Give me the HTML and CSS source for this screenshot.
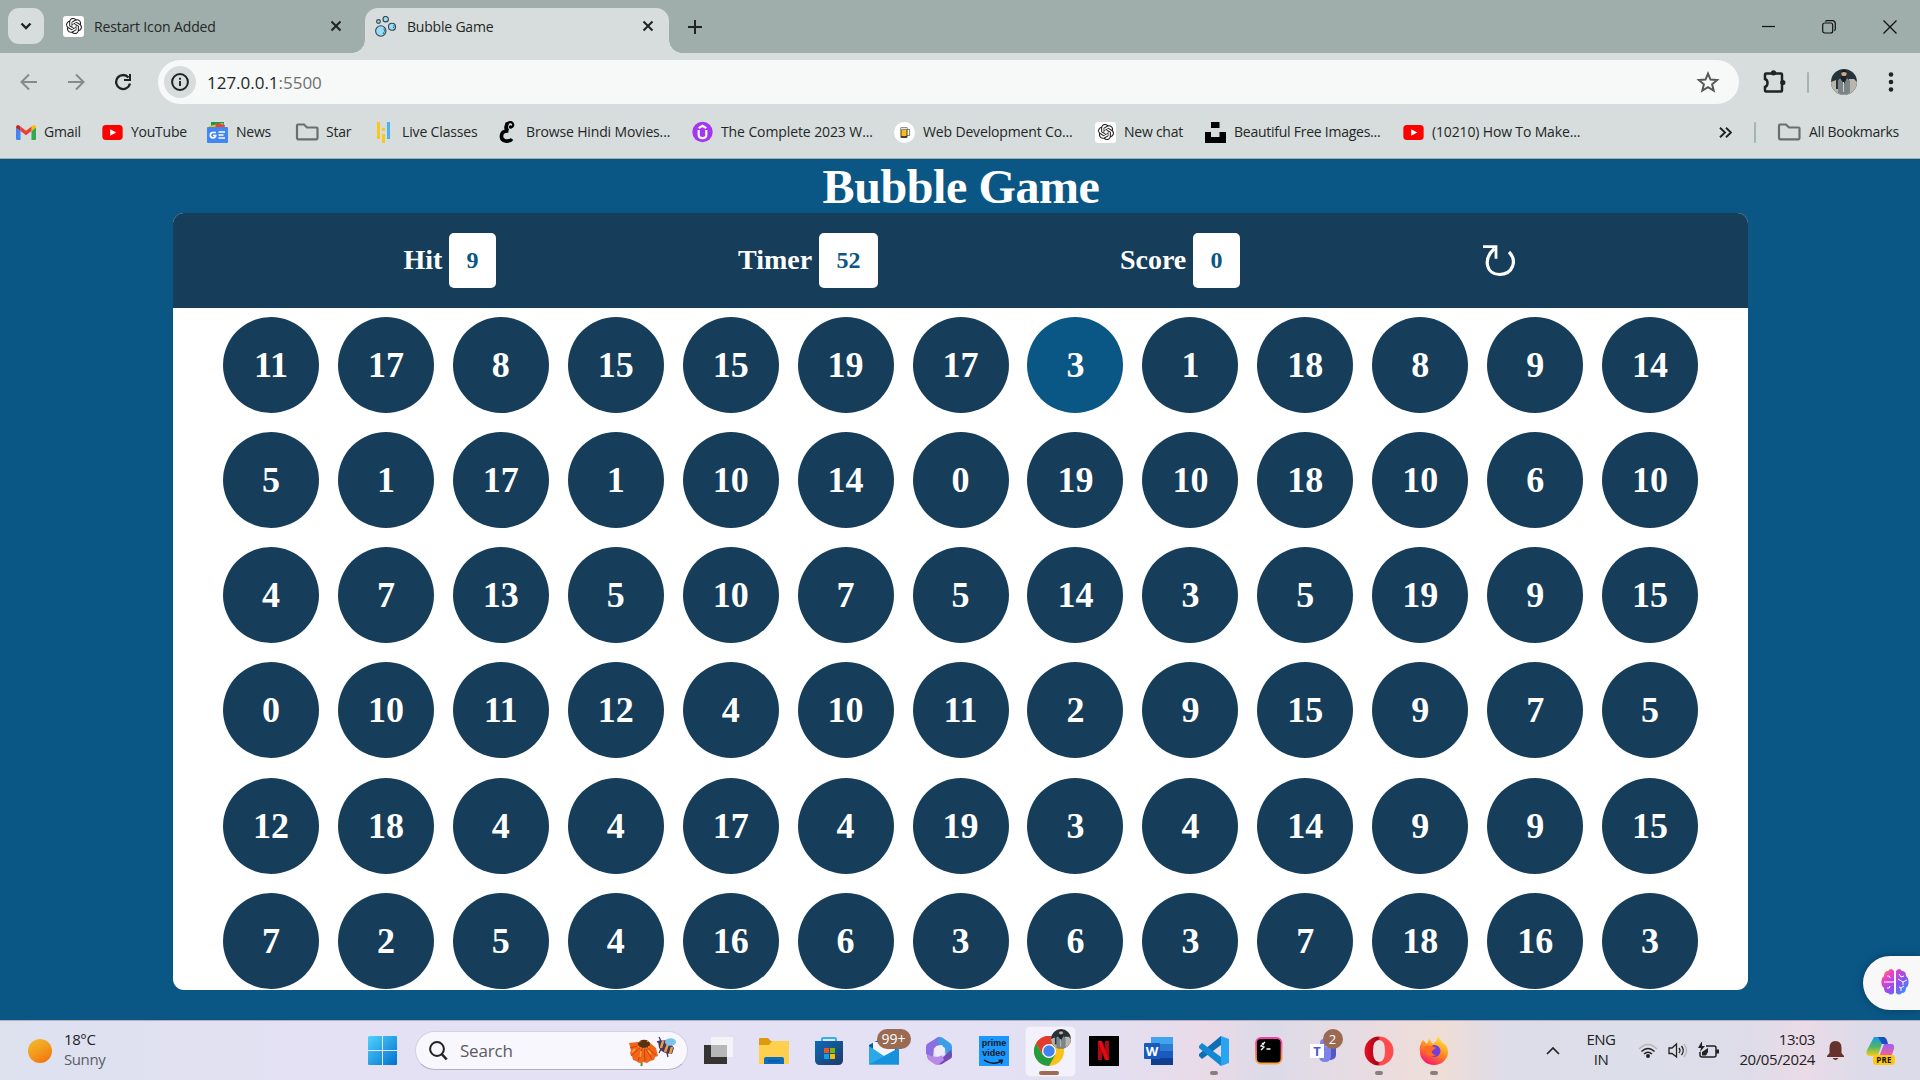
FILE: index.html
```html
<!DOCTYPE html>
<html lang="en">
<head>
<meta charset="utf-8">
<title>Bubble Game</title>
<link rel="stylesheet" href="styles.css">
</head>
<body>
<svg class="defs" width="0" height="0">
  <defs>
    <symbol id="knot" viewBox="0 0 24 24">
      <path fill="#222" d="M22.2819 9.8211a5.9847 5.9847 0 0 0-.5157-4.9108 6.0462 6.0462 0 0 0-6.5098-2.9A6.0651 6.0651 0 0 0 4.9807 4.1818a5.9847 5.9847 0 0 0-3.9977 2.9 6.0462 6.0462 0 0 0 .7427 7.0966 5.98 5.98 0 0 0 .511 4.9107 6.051 6.051 0 0 0 6.5146 2.9001A5.9847 5.9847 0 0 0 13.2599 24a6.0557 6.0557 0 0 0 5.7718-4.2058 5.9894 5.9894 0 0 0 3.9977-2.9001 6.0557 6.0557 0 0 0-.7475-7.0729zm-9.022 12.6081a4.4755 4.4755 0 0 1-2.8764-1.0408l.1419-.0804 4.7783-2.7582a.7948.7948 0 0 0 .3927-.6813v-6.7369l2.02 1.1686a.071.071 0 0 1 .038.052v5.5826a4.504 4.504 0 0 1-4.4945 4.4944zm-9.6607-4.1254a4.4708 4.4708 0 0 1-.5346-3.0137l.142.0852 4.783 2.7582a.7712.7712 0 0 0 .7806 0l5.8428-3.3685v2.3324a.0804.0804 0 0 1-.0332.0615L9.74 19.9502a4.4992 4.4992 0 0 1-6.1408-1.6464zM2.3408 7.8956a4.485 4.485 0 0 1 2.3655-1.9728V11.6a.7664.7664 0 0 0 .3879.6765l5.8144 3.3543-2.0201 1.1685a.0757.0757 0 0 1-.071 0l-4.8303-2.7865A4.504 4.504 0 0 1 2.3408 7.872zm16.5963 3.8558L13.1038 8.364 15.1192 7.2a.0757.0757 0 0 1 .071 0l4.8303 2.7913a4.4944 4.4944 0 0 1-.6765 8.1042v-5.6772a.79.79 0 0 0-.407-.667zm2.0107-3.0231l-.142-.0852-4.7735-2.7818a.7759.7759 0 0 0-.7854 0L9.409 9.2297V6.8974a.0662.0662 0 0 1 .0284-.0615l4.8303-2.7866a4.4992 4.4992 0 0 1 6.6802 4.66zM8.3065 12.863l-2.02-1.1638a.0804.0804 0 0 1-.038-.0567V6.0742a4.4992 4.4992 0 0 1 7.3757-3.4537l-.142.0805L8.704 5.459a.7948.7948 0 0 0-.3927.6813zm1.0976-2.3654l2.602-1.4998 2.6069 1.4998v2.9994l-2.5974 1.4997-2.6067-1.4997Z"/>
    </symbol>
    <symbol id="cross" viewBox="0 0 12 12"><path d="M1.500 1.500l9 9M10.500 1.500l-9 9" stroke="#1f2222" stroke-width="2" fill="none"/></symbol>
    <symbol id="folder" viewBox="0 0 24 18"><path d="M2 14.500v-12q0-1 1-1h6l3 3h9.500q1 0 1 1v9.500q0 1.300-1 1.300H3.200Q2 16.300 2 14.500z" fill="none" stroke="#6b6e6e" stroke-width="2.200"/></symbol>
    <symbol id="youtube" viewBox="0 0 22 16"><rect width="22" height="16" rx="4" fill="#f00"/><path d="M8.500 4.500l6.500 3.500-6.500 3.500z" fill="#fff"/></symbol>
    <symbol id="person" viewBox="0 0 26 26">
      <circle cx="13" cy="13" r="13" fill="#25343a"/>
      <path d="M0 13a13 13 0 0 0 26 0l-3-3h-5v10H5V11z" fill="#b9b5aa"/>
      <path d="M7 11l4-3h4l4 4v12a13 13 0 0 1-12 0z" fill="#7d8487"/>
      <path d="M9 9l4 6 3-6-1-2h-4z" fill="#17222a"/>
      <circle cx="13" cy="4.500" r="2.600" fill="#d0a98c"/><path d="M10.500 4q0-3 2.500-3t2.500 3q-2.500-2-5 0" fill="#16181c"/>
      <path d="M12.500 13v10" stroke="#c9cccc"/>
    </symbol>
  </defs>
</svg>

<header class="browser">
  <div class="tab-strip">
    <button class="tab-search"><svg width="12" height="8" viewBox="0 0 12 8"><path d="M1.500 1.500L6 6l4.500-4.500" fill="none" stroke="#1f2222" stroke-width="2.300"/></svg></button>
    <div class="tab tab-idle">
      <span class="favicon tile"><svg width="16" height="16"><use href="#knot"/></svg></span>
      <span class="tab-title">Restart Icon Added</span>
      <svg class="tab-close" width="12" height="12"><use href="#cross"/></svg>
    </div>
    <div class="tab tab-active">
      <svg class="favicon" viewBox="0 0 21 21"><g fill="#9adcf8" stroke="#35454c" stroke-width="1.100"><circle cx="5.800" cy="15" r="5.200"/><circle cx="17" cy="10.800" r="3.500"/><circle cx="10.700" cy="3.200" r="2.700"/><circle cx="3.500" cy="5.500" r="1.900"/></g><path d="M9 12.500q1.500 3-1 5.500M19 9q.5 2-1 3" stroke="#2c6e94" fill="none"/></svg>
      <span class="tab-title">Bubble Game</span>
      <svg class="tab-close" width="12" height="12"><use href="#cross"/></svg>
    </div>
    <svg class="new-tab" width="14" height="14" viewBox="0 0 14 14"><path d="M7 0v14M0 7h14" stroke="#1f2222" stroke-width="2"/></svg>
    <div class="window-controls">
      <svg width="13" height="13" viewBox="0 0 13 13"><path d="M0 6.500h13" stroke="#111" stroke-width="1.200"/></svg>
      <svg width="14" height="14" viewBox="0 0 14 14"><g fill="none" stroke="#111" stroke-width="1.200"><rect x=".7" y="3" width="10" height="10" rx="2"/><path d="M3.300 1.500q.6-.8 2-.8h5q3 0 3 3v5q0 1.300-.9 2"/></g></svg>
      <svg width="14" height="14" viewBox="0 0 14 14"><path d="M.5.5l13 13M13.500.5l-13 13" stroke="#111" stroke-width="1.300"/></svg>
    </div>
  </div>

  <div class="toolbar">
    <nav class="nav-buttons">
      <svg width="18" height="18" viewBox="0 0 18 18"><path d="M17 9H2M9 1.500L1.500 9 9 16.500" fill="none" stroke="#868b8a" stroke-width="2"/></svg>
      <svg width="18" height="18" viewBox="0 0 18 18"><path d="M1 9h15M9 1.500L16.500 9 9 16.500" fill="none" stroke="#868b8a" stroke-width="2"/></svg>
      <svg width="18" height="18" viewBox="0 0 18 18"><path d="M14.500 4.500A7 7 0 1 0 16 10.500" fill="none" stroke="#1f2222" stroke-width="2.300"/><path d="M17 1v7h-7V6h5V1z" fill="#1f2222"/></svg>
    </nav>
    <div class="address">
      <span class="site-info"><svg width="18" height="18" viewBox="0 0 18 18"><circle cx="9" cy="9" r="7.900" fill="none" stroke="#1f2222" stroke-width="2"/><path d="M9 8v5M9 4.800v2" stroke="#1f2222" stroke-width="1.900"/></svg></span>
      <span class="url">127.0.0.1<i>:5500</i></span>
      <svg class="star" width="24" height="22" viewBox="0 0 24 22"><path d="M12 2.600l2.500 6 6.600.5-5 4.200 1.600 6.300-5.700-3.400-5.700 3.400 1.600-6.300-5-4.200 6.600-.5z" fill="none" stroke="#56595a" stroke-width="2"/></svg>
    </div>
    <div class="tools">
      <svg width="26" height="24" viewBox="0 0 26 24"><path d="M4 4.500q0-1 1-1h15q1 0 1 1v16q0 1-1 1H5q-1 0-1-1V17q2.500-.8 2.500-4T4 9z" fill="none" stroke="#1f2222" stroke-width="2.500"/><circle cx="12.500" cy="2.800" r="2.600" fill="#1f2222"/><circle cx="21.800" cy="12.500" r="2.600" fill="#1f2222"/></svg>
      <span class="divider"></span>
      <svg width="26" height="26"><use href="#person"/></svg>
      <svg width="6" height="20" viewBox="0 0 6 20"><g fill="#1f2222"><circle cx="3" cy="2.500" r="2.300"/><circle cx="3" cy="10" r="2.300"/><circle cx="3" cy="17.500" r="2.300"/></g></svg>
    </div>
  </div>

  <div class="bookmarks">
    <a class="mark"><svg width="20" height="15" viewBox="0 0 20 15"><path d="M0 2v12q0 1 1 1h3.500V6z" fill="#4285f4"/><path d="M20 2v12q0 1-1 1h-3.500V6z" fill="#34a853"/><path d="M15.500 6l4.500-3.500V2q-1-3-3.500-1.300l-1 .8z" fill="#fbbc04"/><path d="M4.500 6L0 2.500V2Q1-1 3.500.7l1 .8z" fill="#c5221f"/><path d="M4.500 1.500L10 5.700l5.500-4.200V6L10 10.300 4.500 6z" fill="#ea4335"/></svg><span>Gmail</span></a>
    <a class="mark"><svg width="21" height="15" viewBox="0 0 22 16"><use href="#youtube"/></svg><span>YouTube</span></a>
    <a class="mark"><svg width="21" height="21" viewBox="0 0 21 21"><path d="M4 0h13v6H4z" fill="#0c9d58"/><path d="M2 4l14-3 2 6H2z" fill="#fbbc04"/><path d="M9 1l9 2-1 5H8z" fill="#ea4335"/><rect y="5" width="21" height="16" rx="1" fill="#4285f4"/><path d="M9 10.500H5.800a2.700 2.700 0 1 0 2.900 3H6M11.500 10h6.500M11.500 13h5M11.500 16h6.500" stroke="#fff" stroke-width="1.700" fill="none"/></svg><span>News</span></a>
    <a class="mark"><svg width="24" height="18"><use href="#folder"/></svg><span class="star-label">Star</span></a>
    <a class="mark"><svg width="16" height="21" viewBox="0 0 16 21"><path d="M1 0h3v17H1zM6 12h3v9H6z" fill="#ffc61a"/><path d="M11 0h3v17h-3z" fill="#4bb3f5"/><path d="M7.500 5.800v3.400" stroke="#ffc61a" stroke-width="3" stroke-dasharray="3 9"/></svg><span class="live">Live Classes</span></a>
    <a class="mark"><svg width="18" height="22" viewBox="0 0 18 22"><path d="M13 6.500q3.500-1.500 1.500-4.500-2-2-5 .2T8 9.500" fill="none" stroke="#000" stroke-width="2.200"/><path d="M10.500 10Q4 9.500 3.500 14.500T7.500 20t6.500-2" fill="none" stroke="#000" stroke-width="3.600"/><path d="M9.500 2Q7 6 9.500 9.500" fill="none" stroke="#000" stroke-width="3.600"/><circle cx="12.500" cy="6" r="1.700"/></svg><span class="movies">Browse Hindi Movies...</span></a>
    <a class="mark"><svg width="21" height="22" viewBox="0 0 22 22"><circle cx="11" cy="11" r="10.700" fill="#a435f0"/><path d="M7 9v5q0 3.500 4 3.500t4-3.500V9M7 7l4-2.500L15 7" fill="none" stroke="#fff" stroke-width="2.300"/></svg><span class="course">The Complete 2023 W...</span></a>
    <a class="mark"><svg width="21" height="21" viewBox="0 0 21 21"><circle cx="10.500" cy="10.500" r="10.500" fill="#fff"/><path d="M13 7.500h2.500v6H13" fill="none" stroke="#888" stroke-width="1.200"/><rect x="6.500" y="5" width="7" height="11" rx="1" fill="#493c2a"/><path d="M7.500 8h5v6h-5z" fill="#f6bd1c"/><path d="M7 5.500h6v2H7z" fill="#e7e2d5"/></svg><span class="webdev">Web Development Co...</span></a>
    <a class="mark"><span class="tile favicon"><svg width="16" height="16"><use href="#knot"/></svg></span><span>New chat</span></a>
    <a class="mark"><svg width="21" height="21" viewBox="0 0 21 21"><path d="M6 0h8.500v6H6zM0 10h6v5h8.500v-5H21v11H0z"/></svg><span>Beautiful Free Images...</span></a>
    <a class="mark"><svg width="21" height="15" viewBox="0 0 22 16"><use href="#youtube"/></svg><span class="webdev">(10210) How To Make...</span></a>
    <div class="bookmarks-end">
      <svg width="13" height="11" viewBox="0 0 13 11"><path d="M1 .7l5 4.800-5 4.800M7 .7l5 4.800-5 4.800" fill="none" stroke="#1f2222" stroke-width="1.900"/></svg>
      <span class="divider"></span>
      <svg width="24" height="18"><use href="#folder"/></svg>
      <span>All Bookmarks</span>
    </div>
  </div>
</header>

<main class="page">
  <h1>Bubble Game</h1>
  <section class="panel">
    <div class="panel-top">
      <div class="stat"><h2>Hit</h2><span class="box">9</span></div>
      <div class="stat"><h2>Timer</h2><span class="box">52</span></div>
      <div class="stat"><h2>Score</h2><span class="box">0</span></div>
      <svg class="restart" width="34" height="32" viewBox="0 0 34 32"><path d="M11.500 3.500C-1 15 4 29.500 16.500 29.500c13.500 0 18-14 9.500-22.500" fill="none" stroke="#fff" stroke-width="3.200"/><path d="M0 1.700h13v12" fill="none" stroke="#fff" stroke-width="2.800"/></svg>
    </div>
    <div class="bubbles"></div>
  </section>
  <aside class="assistant">
    <svg width="28" height="26" viewBox="0 0 28 26"><defs><linearGradient id="brain" x2="1" y2="1"><stop offset="0" stop-color="#ff9a2e"/><stop offset=".25" stop-color="#ef3fc0"/><stop offset=".6" stop-color="#8a50f5"/><stop offset="1" stop-color="#22a5ff"/></linearGradient></defs>
      <path d="M13 2v22q-3 3-6 0-4 0-4-5-3-2-2.500-6Q0 9 3 7q0-5 4-5 3-4 6 0zM15 2v22q3 3 6 0 4 0 4-5 3-2 2.500-6Q28 9 25 7q0-5-4-5-3-4-6 0z" fill="url(#brain)"/>
      <path d="M3 13h10M6 7q3-1 3 2M6 19q3 1 3-2M18 5l2 3 3-1M17 10l5 3 4-2M22 13v3M18 18l2 1 3-2M20 19v3" stroke="#fff" fill="none"/></svg>
  </aside>
</main>

<footer class="taskbar">
  <div class="weather">
    <span class="sun"></span>
    <p><b>18°C</b><span>Sunny</span></p>
  </div>
  <svg class="start" width="29" height="29" viewBox="0 0 29 29"><defs><linearGradient id="win" x2="1" y2="1"><stop offset="0" stop-color="#51d2fb"/><stop offset="1" stop-color="#0070d0"/></linearGradient></defs><path d="M1 0h13v14H0V1zM15 0h13q1 0 1 1v13H15zM0 15h14v14H1q-1 0-1-1zM15 15h14v13q0 1-1 1H15z" fill="url(#win)"/></svg>
  <div class="search">
    <svg width="19" height="20" viewBox="0 0 19 20"><circle cx="8" cy="8" r="6.900" fill="none" stroke="#222" stroke-width="2"/><path d="M12.700 13l5 5.500" stroke="#222" stroke-width="2.600"/></svg>
    <span>Search</span>
    <svg width="48" height="30" viewBox="0 0 48 30">
      <path d="M12.500 24q1.500 2 1 6" stroke="#5b8f1f" stroke-width="2" fill="none"/>
      <path d="M1 7l9-1h11l7 6 2 8-3 1-1 3-4 1-3 2-4-1-4 1-3-2-3-1-1-4-2-2 1-4z" fill="#f2651b"/>
      <path d="M14 10L3 20M15 10l-5 15M16 10l1 15M16 10l8 13M17 10l11 9M14 9L2 12" stroke="#d0400f" stroke-width="1"/>
      <path d="M7 13l-3 3M13 15l-1 6M20 14l3 4" stroke="#ffa62c" stroke-width="1.500"/>
      <ellipse cx="16" cy="8" rx="6" ry="4.300" fill="#5c3012"/><path d="M10 10q6 5 12 0M11 6l2-1M19 5l2 1" stroke="#ee9820" stroke-width="1.300" stroke-dasharray="1.500 1.200" fill="none"/>
      <path d="M30 5l10-1 6 8-2 6q-9 0-13-6z" fill="#4c3263"/><path d="M35 5l-2 7M40 8l-3 8M44 11l-2 7" stroke="#e4a23c" stroke-width="2.500"/><ellipse cx="42.500" cy="6" rx="5.500" ry="3.800" fill="#7bc4ee"/><path d="M31 1l2 4-4 1M33 13l-2 4M39 17l1 4" stroke="#4c3263" stroke-width="1.300" fill="none"/>
    </svg>
  </div>

  <div class="apps">
    <div class="app"><svg viewBox="0 0 30 30"><path d="M0 9h23v19H0z" fill="#353432"/><path d="M7 1h22v20H7z" fill="#f5f5f5" opacity=".9"/><path d="M7 9h16v12H7z" fill="#b7b7b7"/></svg></div>
    <div class="app"><svg viewBox="0 0 30 30"><path d="M0 3q0-1 1-1h8l3 3h18v8H0z" fill="#dc9b0c"/><path d="M0 9h10l3-4h16q1 0 1 1v22H0z" fill="#ffd04d"/><path d="M5 28v-5q0-2 2-2h16q2 0 2 2v5z" fill="#0f6cbd"/><path d="M9 25h12" stroke="#084a8c"/></svg></div>
    <div class="app"><svg viewBox="0 0 30 30"><defs><linearGradient id="bag" x2="1" y2="1"><stop offset="0" stop-color="#0d6ab8"/><stop offset="1" stop-color="#203a66"/></linearGradient></defs><path d="M8 7V2.500Q8 2 9 2h12q1 0 1 1v4" fill="none" stroke="#2fb5ee" stroke-width="2"/><path d="M1 5h28v19q0 5-5 5H6q-5 0-5-5z" fill="url(#bag)"/><path d="M10 12h5v5h-5z" fill="#f25022"/><path d="M16 12h5v5h-5z" fill="#7fba00"/><path d="M10 18h5v5h-5z" fill="#00a4ef"/><path d="M16 18h5v5h-5z" fill="#ffb900"/></svg></div>
    <div class="app"><svg viewBox="0 0 30 30"><path d="M0 9L13 2l17 8v10H0z" fill="#0c59a4"/><path d="M4 6h22v9l-11 7L4 14z" fill="#f4f4f8"/><path d="M0 10l15 10 15-8v16.500H0z" fill="#2ba9e6"/><path d="M0 28.500L30 12v16.500z" fill="#1692dc"/></svg><span class="badge badge-wide">99+</span></div>
    <div class="app"><svg viewBox="0 0 30 30"><path d="M14 1L3 8q-1 1-1 3v7l7 4 1-10 10-5-3-6z" fill="#8b6fe0"/><path d="M15 1q2-.5 4 1l7 5q2 1 2 4v10l-6 3-1-12-8-5z" fill="#3d9de6"/><path d="M3 18l6 3 9 1 9-8 1 5q0 3-2 4l-8 5q-3 1-6 0l-7-4q-2-2-2-6z" fill="#7548b4"/><path d="M3 18q8 5 15 1l2 5-6 5q-3 0-5-2-6-3-6-9z" fill="#b98ae8"/><path d="M12 10l6-1 3 5-2 5-6 2-3-5z" fill="#eeeaf9"/></svg></div>
    <div class="app"><div class="prime"><span>prime</span><span>video</span><svg viewBox="0 0 24 6"><path d="M1 1q10 6 19 1M17 1h4l-1 4" fill="none" stroke="#101820" stroke-width="1.600"/></svg></div></div>
    <div class="app current running"><svg viewBox="0 0 30 30"><circle cx="15" cy="15" r="15" fill="#fbc116"/><path d="M15 8H28.500A15 15 0 0 0 2 7.500l6.500 11z" fill="#e33b2e"/><path d="M2 7.500A15 15 0 0 0 15 30l6.500-11.500h-13z" fill="#249a41"/><circle cx="15" cy="15" r="7" fill="#fff"/><circle cx="15" cy="15" r="5.700" fill="#3f82f0"/></svg><svg class="face" viewBox="0 0 26 26"><use href="#person"/></svg></div>
    <div class="app"><svg viewBox="0 0 30 30"><path d="M0 0h30v30H0z"/><path d="M9 5h4v19H9zM16 5h4v19h-4z" fill="#b20710"/><path d="M9 5h4l7 19h-4z" fill="#e50914"/></svg></div>
    <div class="app"><svg viewBox="0 0 30 30"><path d="M7 1h22v7H7z" fill="#41a5ee"/><path d="M7 8h22v7H7z" fill="#2b7cd3"/><path d="M7 15h22v7H7z" fill="#185abd"/><path d="M7 22h22v7H7z" fill="#103f91"/><rect y="7" width="16" height="16" rx="1" fill="#185abd"/><text x="8" y="19.500" class="glyph" fill="#fff">W</text></svg></div>
    <div class="app running"><svg viewBox="0 0 30 30"><path d="M22 0l8 3v24l-8 3z" fill="#27a5f2"/><path d="M22 0v9L3 23l-3-3v-2z" fill="#0c6fb3"/><path d="M0 10l3-3 19 14v9L0 12z" fill="#1488d0"/></svg></div>
    <div class="app"><svg viewBox="0 0 30 30"><defs><linearGradient id="term" x2="0" y2="1"><stop offset="0" stop-color="#f33fae"/><stop offset="1" stop-color="#ffa23c"/></linearGradient></defs><rect x="2" y="2" width="25.500" height="25.500" rx="5" fill="#000" stroke="url(#term)" stroke-width="1.800"/><path d="M11 6l-4 4 3 1-3 3M8 7l2 2M12.500 13h4" stroke="#fff" stroke-width="1.300" fill="none"/></svg></div>
    <div class="app"><svg viewBox="0 0 30 30"><path d="M18 12h9v7q0 4-5 5h-4z" fill="#5059c9"/><circle cx="15" cy="7" r="4" fill="#7b83eb"/><path d="M10 11h12v9q0 6-6 6t-6-6z" fill="#7b83eb"/><path d="M1 8h14v14H1z" fill="#fff"/><text x="8" y="19.500" class="glyph" fill="#5059c9">T</text></svg><span class="badge">2</span></div>
    <div class="app running"><svg viewBox="0 0 30 30"><defs><linearGradient id="op"><stop offset="0" stop-color="#e81126"/><stop offset=".45" stop-color="#a70014"/><stop offset=".55" stop-color="#ff4b4b"/></linearGradient></defs><path fill-rule="evenodd" d="M15 .5a14.500 14.500 0 1 0 0 29 14.500 14.500 0 0 0 0-29zM15 4q6 0 6 11t-6 11-6-11 6-11z" fill="url(#op)"/></svg></div>
    <div class="app running"><svg viewBox="0 0 30 30"><defs><linearGradient id="fox" x1=".8" x2=".3" y2="1"><stop offset="0" stop-color="#fff04a"/><stop offset=".5" stop-color="#ff8c1c"/><stop offset="1" stop-color="#f5156c"/></linearGradient></defs><path d="M4 4l4 4 2-5 4 5 3-3 2-5 4 6 4 3q2 3 2 7a14 13 0 0 1-28 0Q0 9 4 4z" fill="url(#fox)"/><circle cx="15.500" cy="15" r="6" fill="#7140d8"/><path d="M5 11q6-3 12 1l-4 3q-1 3 4 4-6 3-10-1z" fill="#ff6b24"/></svg></div>
  </div>

  <div class="tray">
    <svg class="up" width="14" height="8" viewBox="0 0 14 8"><path d="M1 7l6-6 6 6" fill="none" stroke="#222" stroke-width="1.700"/></svg>
    <p class="lang"><span>ENG</span><span>IN</span></p>
    <div class="status">
      <svg width="20" height="16" viewBox="0 0 20 16"><g fill="none" stroke-width="1.500"><path d="M1 6q9-9 18 0" stroke="#b5b5bd"/><path d="M3.500 8.500q6.500-6 13 0M6 11q4-3.500 8 0" stroke="#222"/></g><circle cx="10" cy="13" r="2" fill="#222"/></svg>
      <svg width="20" height="17" viewBox="0 0 20 17"><g fill="none" stroke="#222" stroke-width="1.300"><path d="M1 6h3l4.500-4v13L4 11.500H1zM11 6q2 2.500 0 5M13.500 4q3.500 4.500 0 9"/><path d="M16 2q5 6.500 0 13" stroke="#b5b5bd"/></g></svg>
      <svg width="21" height="17" viewBox="0 0 21 17"><path d="M8 4h8q2 0 2 2v7q0 2-2 2H4q-2 0-2-2v-3" fill="none" stroke="#222" stroke-width="1.500"/><path d="M4 13.500V10l6-4v4l-2 3.500zM18 7.500h3v4h-3zM4-1L0 6h3L2 10l5-6H4z" fill="#222"/></svg>
    </div>
    <p class="clock"><span>13:03</span><span>20/05/2024</span></p>
    <svg class="bell" width="17" height="20" viewBox="0 0 17 20"><path d="M8.500 0q6 0 6 7v5l2.500 3v1H0v-1l2.500-3V7q0-7 6-7zM5.500 17h6q-3 4-6 0z" fill="#64332a"/></svg>
    <div class="copilot"><svg width="30" height="24" viewBox="0 0 30 24"><defs><linearGradient id="cp" x2="0" y2="1"><stop offset="0" stop-color="#159ce8"/><stop offset=".5" stop-color="#4eb46b"/><stop offset="1" stop-color="#f6cf16"/></linearGradient><linearGradient id="cq" x2="0" y2="1"><stop offset="0" stop-color="#a060f0"/><stop offset="1" stop-color="#ff5f8c"/></linearGradient></defs><path d="M8 1h10L12 20H4q-5 0-3-6z" fill="url(#cp)"/><path d="M12 1h6q3 1 4 7h-6z" fill="#1a4fc4"/><path d="M18 8h7q4 0 3 5l-3 8H13z" fill="url(#cq)"/></svg><span>PRE</span></div>
  </div>
</footer>
<script src="bubbles.js"></script>
</body>
</html>
```
FILE: styles.css
```css
* { box-sizing: border-box; margin: 0; padding: 0; }
body {
  width: 1920px; height: 1080px; overflow: hidden;
  display: flex; flex-direction: column;
  font-family: "Open Sans", "Noto Sans", sans-serif;
  color: #232727;
}
svg { display: block; flex: none; }
.defs { position: absolute; }
p { display: flex; flex-direction: column; }

/* browser chrome */
.browser { height: 159px; flex: none; background: #d7dddc; border-bottom: 1px solid #a0adab; font-size: 14px; }
.tab-strip { height: 53px; display: flex; background: #a0aeab; padding-left: 8px; }
.tab-search { width: 36px; height: 36px; margin-top: 8px; border: 0; border-radius: 11px; background: #d7dddc; display: grid; place-items: center; }
.tab { display: flex; align-items: center; height: 45px; margin-top: 8px; padding-bottom: 9px; }
.tab-idle { width: 321px; padding-left: 19px; padding-right: 23px; }
.tab-active { width: 304px; padding-left: 10px; padding-right: 15px; background: #d7dddc; border-radius: 13px 13px 0 0; position: relative; }
.tab-active::before, .tab-active::after { content: ""; position: absolute; bottom: 0; width: 13px; height: 13px; }
.tab-active::before { left: -13px; background: radial-gradient(circle at 0 0, #a0aeab 12.5px, #d7dddc 13px); }
.tab-active::after { right: -13px; background: radial-gradient(circle at 100% 0, #a0aeab 12.5px, #d7dddc 13px); }
.favicon { width: 21px; height: 21px; flex: none; }
.tile { background: #fff; border-radius: 3px; display: grid; place-items: center; }
.tab-title { margin-left: 10px; white-space: nowrap; letter-spacing: -0.12px; }
.tab-active .tab-title { margin-left: 11px; letter-spacing: -0.2px; }
.tab-close { margin-left: auto; }
.new-tab { margin: 20px 0 0 19px; }
.window-controls { margin-left: auto; display: flex; align-items: center; gap: 47px; padding-right: 23px; height: 53px; }

.toolbar { height: 58px; display: flex; align-items: center; padding-left: 20px; }
.nav-buttons { display: flex; gap: 29px; width: 138px; }
.address { width: 1581px; height: 44px; border-radius: 22px; background: #f7f9f8; display: flex; align-items: center; padding: 0 19px 0 6px; }
.site-info { width: 32px; height: 32px; border-radius: 50%; background: #d7dddc; display: grid; place-items: center; }
.url { margin-left: 11px; font-size: 17px; letter-spacing: -0.02px; }
.url i { font-style: normal; color: #6d7170; }
.star { margin-left: auto; }
.tools { display: flex; align-items: center; padding-left: 22px; }
.divider { width: 2px; height: 21px; background: #a4b4b1; border-radius: 1px; }
.tools .divider { margin: 0 22px 0 20px; }
.tools svg:last-child { margin-left: 31px; }

.bookmarks { height: 42px; display: grid; align-items: center; padding-left: 16px; white-space: nowrap; letter-spacing: -0.25px;
  grid-template-columns: 86px 105px 88px 81px 122px 194px 202px 201px 110px 198px 316px auto; }
.mark { display: flex; align-items: center; gap: 8px; }
.mark span:last-child, .bookmarks-end span:last-child { position: relative; top: -1px; }
.mark .star-label { margin-left: -1px; }
.mark .live { margin-left: 2px; letter-spacing: -0.15px; }
.mark .movies { margin-left: 2px; letter-spacing: -0.15px; }
.mark .course { letter-spacing: -0.1px; }
.mark .webdev { letter-spacing: -0.15px; }
.bookmarks-end { display: flex; align-items: center; }
.bookmarks-end .divider { margin: 0 21px 0 22px; }
.bookmarks-end span:last-child { margin-left: 8px; }

/* game */
.page { height: 861px; flex: none; background: #0a5786; font-family: "Liberation Serif", "Times New Roman", serif; color: #fff; position: relative; }
.page h1 { height: 54px; line-height: 55px; text-align: center; font-size: 48px; letter-spacing: -0.4px; padding-left: 2px; }
.panel { width: 1575px; height: 777px; margin-left: 173px; background: #fff; border-radius: 11px; overflow: hidden; }
.panel-top { height: 95px; background: #163d59; display: flex; align-items: center; padding-left: 230.5px; gap: 242px; }
.stat { display: flex; align-items: center; gap: 6.7px; }
.stat h2 { font-size: 28px; line-height: 32px; position: relative; top: -1px; }
.box { height: 55px; line-height: 55px; padding: 0 17.5px; border-radius: 5px; background: #fff; color: #0a5786; font-size: 24px; font-weight: bold; }
.restart { margin-left: 1px; }
.bubbles { display: grid; grid-template-columns: repeat(13, 96px); gap: 19.17px 18.93px; padding: 9px 0 0 50px; }
.bubble { width: 96px; height: 96px; border-radius: 50%; background: #163d59; display: grid; place-items: center; font-size: 36px; font-weight: bold; }
.bubble.hover { background: #0a5786; }
.assistant { position: absolute; right: 0; top: 797px; width: 57px; height: 54px; padding: 13px 0 0 18px; border-radius: 27px 0 0 27px; background: #f8f8f9; box-shadow: 0 0 8px rgba(0,0,0,.3); }

/* taskbar */
.taskbar { height: 60px; flex: none; display: flex; align-items: center; border-top: 1px solid #b4aebf; color: #222;
  background: linear-gradient(90deg, #dde1ee 0, #e4e1f4 18%, #e4e1f5 50%, #e2dff0 58%, #eadae8 63%, #dcdae8 66%, #e8dce2 71%, #efddd6 75%, #dddce9 78.5%, #dcdfea 86%, #dedce9 91%, #eadbe7 94%, #dddbe9 97%, #dcdbe9 100%); }
.weather { display: flex; align-items: center; width: 368px; padding-left: 28px; font-size: 15px; line-height: 20px; }
.weather p { margin-left: 12px; letter-spacing: -0.4px; padding-bottom: 4px; }
.weather b { font-weight: normal; }
.weather p span { color: #5d5b66; }
.sun { width: 24px; height: 24px; border-radius: 50%; background: linear-gradient(150deg, #f0c030, #f39a1c 50%, #f26a0c); }
.search { width: 273px; height: 39px; margin-left: 18px; padding: 0 11px 0 13px; border-radius: 20px; background: #f8f7fd; border: 1px solid #d3d0e2; border-bottom-color: #b3b0c2; display: flex; align-items: center; color: #5b5a62; font-size: 17px; }
.search span { margin-left: 12px; letter-spacing: -0.2px; flex: 1; }
.apps { display: grid; grid-template-columns: repeat(14, 55px); margin-left: 3.5px; height: 59px; }
.app { position: relative; display: grid; place-items: center; height: 59px; }
.app > svg { width: 30px; height: 30px; position: relative; }
.app.current::before { content: ""; position: absolute; left: 3px; top: 5px; width: 49px; height: 49px; border-radius: 5px; background: #f3f1fb; border: 1px solid #e9e6f2; }
.app.running::after { content: ""; position: absolute; bottom: 5px; left: 23.5px; width: 8px; height: 4px; border-radius: 2px; background: #85807f; }
.app.current::after { left: 17.5px; width: 20px; background: #9d6c54; }
.app > .face { position: absolute; width: 20px; height: 20px; left: 29px; top: 8px; }
.badge { position: absolute; left: 26px; top: 8px; width: 20px; height: 20px; border-radius: 10px; background: #9a6a53; color: #fff; font-size: 13px; line-height: 20px; text-align: center; }
.badge-wide { left: 20px; width: 34px; font-size: 14px; }
.prime { width: 30px; height: 30px; background: #1a98ff; color: #101820; font: bold 9px/10.5px "Liberation Sans", Arial, sans-serif; text-align: center; padding-top: 2px; }
.prime span { display: block; }
.prime svg { width: 22px; height: 6px; margin: 0 auto; }
.glyph { font: bold 13px "Open Sans", sans-serif; text-anchor: middle; }
.tray { display: flex; align-items: center; margin-left: 84.5px; font-size: 15px; line-height: 20px; letter-spacing: -0.5px; }
.tray p { padding-bottom: 3px; }
.lang { width: 30px; margin-left: 26px; text-align: center; }
.status { display: flex; gap: 10px; align-items: center; margin-left: 22px; }
.clock { width: 86px; margin-left: 10px; text-align: right; letter-spacing: -0.4px; }
.bell { margin-left: 12px; }
.copilot { margin-left: 22px; width: 30px; position: relative; padding-bottom: 5px; }
.copilot span { position: absolute; left: 7px; bottom: 0; width: 22px; height: 10px; border-radius: 3px; background: #ffc814; color: #111; font-size: 8px; font-weight: bold; line-height: 10px; text-align: center; letter-spacing: .3px; }
```
FILE: bubbles.js
```js
const values = [
  11, 17, 8, 15, 15, 19, 17, 3, 1, 18, 8, 9, 14,
  5, 1, 17, 1, 10, 14, 0, 19, 10, 18, 10, 6, 10,
  4, 7, 13, 5, 10, 7, 5, 14, 3, 5, 19, 9, 15,
  0, 10, 11, 12, 4, 10, 11, 2, 9, 15, 9, 7, 5,
  12, 18, 4, 4, 17, 4, 19, 3, 4, 14, 9, 9, 15,
  7, 2, 5, 4, 16, 6, 3, 6, 3, 7, 18, 16, 3
];
const field = document.querySelector('.bubbles');
values.forEach((value, index) => {
  const bubble = document.createElement('div');
  bubble.className = index === 7 ? 'bubble hover' : 'bubble';
  bubble.textContent = value;
  field.append(bubble);
});
```
